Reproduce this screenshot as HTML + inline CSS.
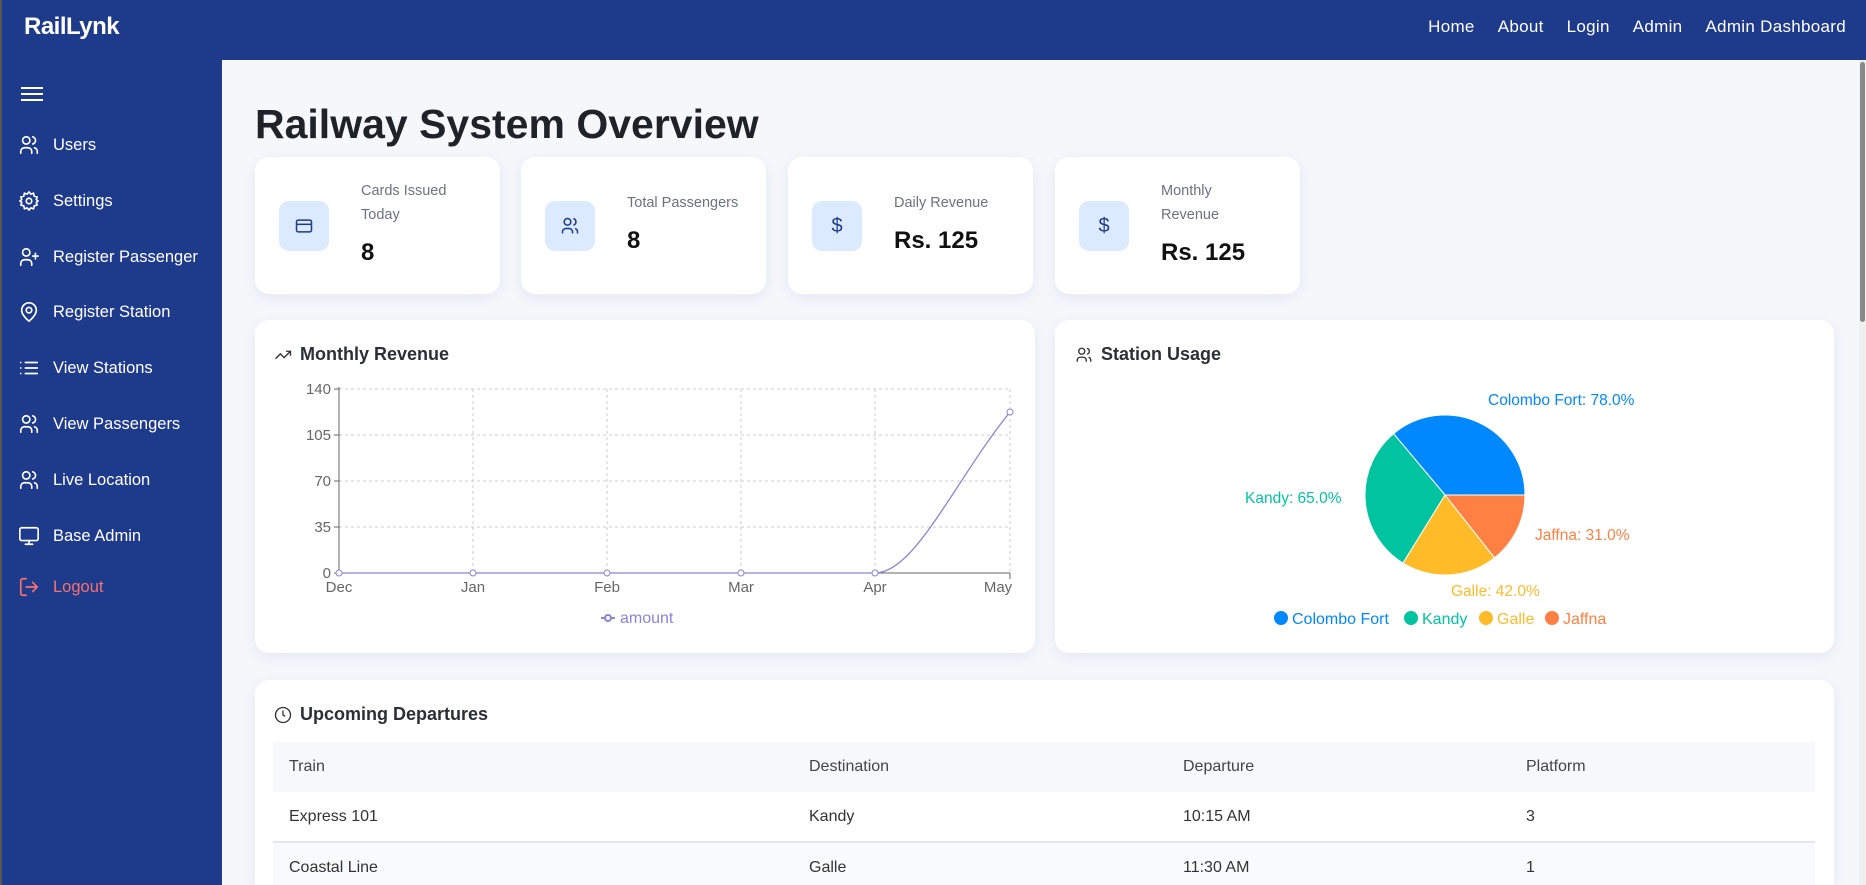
<!DOCTYPE html>
<html><head><meta charset="utf-8"><style>
*{box-sizing:border-box;margin:0;padding:0}
html,body{width:1866px;height:885px;overflow:hidden}
body{background:#f5f7fb;font-family:"Liberation Sans",sans-serif;color:#1f2937;position:relative}
.hdr{position:absolute;left:0;top:0;width:1866px;height:60px;background:#1e3a8a;border-left:2px solid #555}
.logo{position:absolute;left:22px;top:13px;color:#fff;font-size:24px;font-weight:bold;letter-spacing:-0.5px}
.nav{position:absolute;right:20px;top:17px;color:#fff;font-size:17px;letter-spacing:0.3px}
.nav span{margin-left:23px}
.side{position:absolute;left:0;top:60px;width:222px;height:825px;background:#1e3a8a;border-left:2px solid #555}
.item{position:absolute;left:16px;color:#fff;font-size:16.5px;display:flex;align-items:center}
.item svg{width:22px;height:22px;margin-right:13px;fill:none;stroke:#fff;stroke-width:1.8;stroke-linecap:round;stroke-linejoin:round}
h1{position:absolute;left:255px;top:101px;font-size:41px;font-weight:bold;color:#1f2328}
.card{position:absolute;background:#fff;border-radius:14px;box-shadow:0 4px 14px rgba(30,58,138,.08)}
.st{top:157px;width:245px;height:137px}
.ib{position:absolute;left:24px;top:44px;width:50px;height:50px;border-radius:10px;background:#dbeafe;display:flex;align-items:center;justify-content:center;color:#1e3a8a}
.ib svg{width:20px;height:20px;fill:none;stroke:#1e3a8a;stroke-width:1.8}
.lab{position:absolute;left:106px;font-size:14.5px;color:#6b7280;line-height:24px}
.val{position:absolute;left:106px;font-size:24px;font-weight:bold;color:#111}
.ct{position:absolute;font-size:18px;font-weight:bold;color:#2b2f36;display:flex;align-items:center}
.ct svg{width:18px;height:18px;margin-right:8px;fill:none;stroke:#333;stroke-width:1.8}
table{position:absolute;left:18px;top:62px;width:1542px;border-collapse:collapse;font-size:16px;color:#333}
td{height:50px;padding-left:16px}
tr.h{background:#f7f8fa;color:#444}
tr.b{border-top:2px solid #e5e7eb;background:#f9fafb}
</style></head><body>
<div class="hdr"><div class="logo">RailLynk</div>
<div class="nav"><span>Home</span><span>About</span><span>Login</span><span>Admin</span><span>Admin Dashboard</span></div></div>
<div class="side">
<svg style="position:absolute;left:19px;top:26px" width="22" height="16"><g stroke="#fff" stroke-width="2"><line x1="0" y1="2" x2="22" y2="2"/><line x1="0" y1="8" x2="22" y2="8"/><line x1="0" y1="14" x2="22" y2="14"/></g></svg>
<div class="item" style="top:74px"><svg viewBox="0 0 24 24"><circle cx="9" cy="7" r="4"/><path d="M3 21v-2a4 4 0 0 1 4-4h4a4 4 0 0 1 4 4v2M16 3.1a4 4 0 0 1 0 7.8M21 21v-2a4 4 0 0 0-3-3.9"/></svg>Users</div>
<div class="item" style="top:130px"><svg viewBox="0 0 24 24"><circle cx="12" cy="12" r="3"/><path d="M12 2l2 2.5 3-1 .7 3.2 3.2.8-1 3 2.1 1.5-2.1 1.5 1 3-3.2.8-.7 3.2-3-1L12 22l-2-2.5-3 1-.7-3.2-3.2-.8 1-3L2 12l2.1-1.5-1-3 3.2-.8L7 3.5l3 1z"/></svg>Settings</div>
<div class="item" style="top:186px"><svg viewBox="0 0 24 24"><circle cx="9" cy="7" r="4"/><path d="M3 21v-2a4 4 0 0 1 4-4h4a4 4 0 0 1 4 4v2M19 8v6M16 11h6"/></svg>Register Passenger</div>
<div class="item" style="top:241px"><svg viewBox="0 0 24 24"><path d="M20 10c0 6-8 12-8 12S4 16 4 10a8 8 0 0 1 16 0z"/><circle cx="12" cy="10" r="3"/></svg>Register Station</div>
<div class="item" style="top:297px"><svg viewBox="0 0 24 24"><path d="M8 6h13M8 12h13M8 18h13M3 6h.01M3 12h.01M3 18h.01"/></svg>View Stations</div>
<div class="item" style="top:353px"><svg viewBox="0 0 24 24"><circle cx="9" cy="7" r="4"/><path d="M3 21v-2a4 4 0 0 1 4-4h4a4 4 0 0 1 4 4v2M16 3.1a4 4 0 0 1 0 7.8M21 21v-2a4 4 0 0 0-3-3.9"/></svg>View Passengers</div>
<div class="item" style="top:409px"><svg viewBox="0 0 24 24"><circle cx="9" cy="7" r="4"/><path d="M3 21v-2a4 4 0 0 1 4-4h4a4 4 0 0 1 4 4v2M16 3.1a4 4 0 0 1 0 7.8M21 21v-2a4 4 0 0 0-3-3.9"/></svg>Live Location</div>
<div class="item" style="top:465px"><svg viewBox="0 0 24 24"><rect x="2" y="3" width="20" height="14" rx="2"/><path d="M8 21h8M12 17v4"/></svg>Base Admin</div>
<div class="item" style="top:516px;color:#f87171"><svg viewBox="0 0 24 24" style="stroke:#f87171"><path d="M9 21H5a2 2 0 0 1-2-2V5a2 2 0 0 1 2-2h4M16 17l5-5-5-5M21 12H9"/></svg>Logout</div>
</div>
<h1>Railway System Overview</h1>

<div class="card st" style="left:255px"><div class="ib"><svg viewBox="0 0 24 24"><rect x="3" y="5" width="18" height="14" rx="2"/><path d="M3 10h18"/></svg></div><div class="lab" style="top:22px">Cards Issued<br>Today</div><div class="val" style="top:82px">8</div></div>
<div class="card st" style="left:521px"><div class="ib"><svg viewBox="0 0 24 24"><circle cx="9" cy="7" r="4"/><path d="M3 21v-2a4 4 0 0 1 4-4h4a4 4 0 0 1 4 4v2M16 3.1a4 4 0 0 1 0 7.8M21 21v-2a4 4 0 0 0-3-3.9"/></svg></div><div class="lab" style="top:34px">Total Passengers</div><div class="val" style="top:70px">8</div></div>
<div class="card st" style="left:788px"><div class="ib" style="font-size:20px">$</div><div class="lab" style="top:34px">Daily Revenue</div><div class="val" style="top:70px">Rs. 125</div></div>
<div class="card st" style="left:1055px"><div class="ib" style="font-size:20px">$</div><div class="lab" style="top:22px">Monthly<br>Revenue</div><div class="val" style="top:82px">Rs. 125</div></div>

<div class="card" style="left:255px;top:320px;width:780px;height:333px"></div>
<div class="ct" style="left:274px;top:344px"><svg viewBox="0 0 24 24"><path d="M22 7l-8.5 8.5-5-5L2 17M16 7h6v6"/></svg>Monthly Revenue</div>
<svg style="position:absolute;left:255px;top:320px" width="780" height="333" font-family="Liberation Sans" font-size="15" fill="#666">
<g stroke="#ccc" stroke-dasharray="3 3"><line x1="84" y1="69" x2="755" y2="69"/><line x1="84" y1="115" x2="755" y2="115"/><line x1="84" y1="161" x2="755" y2="161"/><line x1="84" y1="207" x2="755" y2="207"/>
<line x1="218" y1="69" x2="218" y2="253"/><line x1="352" y1="69" x2="352" y2="253"/><line x1="486" y1="69" x2="486" y2="253"/><line x1="620" y1="69" x2="620" y2="253"/><line x1="755" y1="69" x2="755" y2="253"/></g>
<g stroke="#666"><line x1="84" y1="67" x2="84" y2="253"/><line x1="84" y1="253" x2="755" y2="253"/>
<line x1="79" y1="69" x2="84" y2="69"/><line x1="79" y1="115" x2="84" y2="115"/><line x1="79" y1="161" x2="84" y2="161"/><line x1="79" y1="207" x2="84" y2="207"/><line x1="79" y1="253" x2="84" y2="253"/><line x1="755" y1="253" x2="755" y2="259"/></g>
<g text-anchor="end"><text x="76" y="74">140</text><text x="76" y="120">105</text><text x="76" y="166">70</text><text x="76" y="212">35</text><text x="76" y="258">0</text></g>
<g text-anchor="middle"><text x="84" y="272">Dec</text><text x="218" y="272">Jan</text><text x="352" y="272">Feb</text><text x="486" y="272">Mar</text><text x="620" y="272">Apr</text><text x="743" y="272">May</text></g>
<path d="M84 253H620C660 253 700 160 755 92" fill="none" stroke="#8884d8" stroke-width="1.3"/>
<g fill="#fff" stroke="#8884d8"><circle cx="84" cy="253" r="3"/><circle cx="218" cy="253" r="3"/><circle cx="352" cy="253" r="3"/><circle cx="486" cy="253" r="3"/><circle cx="620" cy="253" r="3"/><circle cx="755" cy="92" r="3"/></g>
<line x1="346" y1="298" x2="360" y2="298" stroke="#8884d8" stroke-width="2"/><circle cx="353" cy="298" r="3" fill="#fff" stroke="#8884d8" stroke-width="2"/>
<text x="365" y="303" fill="#8884d8" font-size="16">amount</text>
</svg>

<div class="card" style="left:1055px;top:320px;width:779px;height:333px"></div>
<div class="ct" style="left:1075px;top:344px"><svg viewBox="0 0 24 24"><circle cx="9" cy="7" r="4"/><path d="M3 21v-2a4 4 0 0 1 4-4h4a4 4 0 0 1 4 4v2M16 3.1a4 4 0 0 1 0 7.8M21 21v-2a4 4 0 0 0-3-3.9"/></svg>Station Usage</div>
<svg style="position:absolute;left:0;top:0" width="1866" height="885" font-family="Liberation Sans" font-size="15.5">
<g stroke="#fff" stroke-width="1">
<path d="M1445 495L1525 495A80 80 0 0 0 1393.6 433.7Z" fill="#0088FE"/>
<path d="M1445 495L1393.6 433.7A80 80 0 0 0 1403 563.1Z" fill="#00C49F"/>
<path d="M1445 495L1403 563.1A80 80 0 0 0 1494.6 557.8Z" fill="#FFBB28"/>
<path d="M1445 495L1494.6 557.8A80 80 0 0 0 1525 495Z" fill="#FF8042"/></g>
<text x="1488" y="405" fill="#0088FE">Colombo Fort: 78.0%</text>
<text x="1245" y="503" fill="#00C49F">Kandy: 65.0%</text>
<text x="1535" y="540" fill="#FF8042">Jaffna: 31.0%</text>
<text x="1451" y="596" fill="#FFBB28">Galle: 42.0%</text>
<g font-size="16"><circle cx="1281" cy="618" r="7" fill="#0088FE"/><text x="1292" y="624" fill="#0088FE">Colombo Fort</text>
<circle cx="1411" cy="618" r="7" fill="#00C49F"/><text x="1422" y="624" fill="#00C49F">Kandy</text>
<circle cx="1486" cy="618" r="7" fill="#FFBB28"/><text x="1497" y="624" fill="#FFBB28">Galle</text>
<circle cx="1552" cy="618" r="7" fill="#FF8042"/><text x="1563" y="624" fill="#FF8042">Jaffna</text></g>
</svg>

<div class="card" style="left:255px;top:680px;width:1579px;height:205px;border-radius:14px 14px 0 0">
<div class="ct" style="left:19px;top:24px"><svg viewBox="0 0 24 24"><circle cx="12" cy="12" r="10"/><path d="M12 6v6l3 2"/></svg>Upcoming Departures</div>
<table>
<tr class="h"><td style="width:520px">Train</td><td style="width:374px">Destination</td><td style="width:343px">Departure</td><td>Platform</td></tr>
<tr><td>Express 101</td><td>Kandy</td><td>10:15 AM</td><td>3</td></tr>
<tr class="b"><td>Coastal Line</td><td>Galle</td><td>11:30 AM</td><td>1</td></tr>
</table></div>
<div style="position:absolute;left:1859px;top:60px;width:7px;height:825px;background:#f0f0f0"><div style="margin:2px 1px;height:260px;background:#888;border-radius:3px"></div></div>
</body></html>
